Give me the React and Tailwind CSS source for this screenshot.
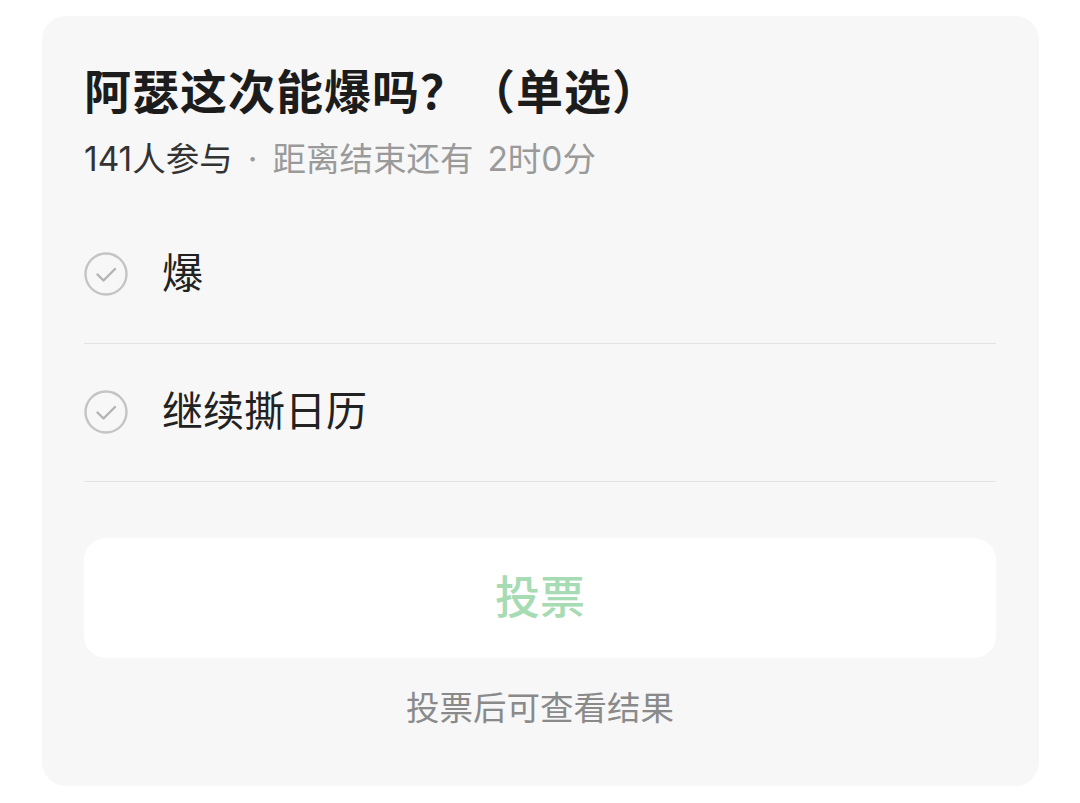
import React from 'react';

const options = ['爆', '继续撕日历'];

const CheckCircle = () => (
  <svg width="46" height="46" viewBox="0 0 46 46" fill="none" className="shrink-0">
    <circle cx="23" cy="23" r="20.5" stroke="#c4c4c4" strokeWidth="2.4" />
    <path d="M14.5 23.5l6 6 11.5-11.5" stroke="#b3b3b3" strokeWidth="2.4" strokeLinecap="round" strokeLinejoin="round" />
  </svg>
);

const App = () => {
  return (
    <div className="min-h-[803px] w-full bg-white pt-[16px] font-['Inter','Noto_Sans_CJK_SC',sans-serif]">
      <div className="ml-[42px] flex h-[770px] w-[997px] flex-col rounded-[24px] bg-[#f7f7f7] pl-[42px] pr-[43px] pt-[46px]">
        <h1 className="text-[47px] leading-[60px] font-bold tracking-[1px] text-[#1c1c1c]">
          阿瑟这次能爆吗？（单选）
        </h1>
        <p className="mt-[17px] text-[33.5px] leading-[40px] text-[#333]">
          141人参与
          <span className="text-[#9a9a9a]">
            <span className="px-[15px]">·</span>距离结束还有<span className="pl-[14px]">2时0分</span>
          </span>
        </p>

        <div className="mt-[27px]">
          {options.map((opt) => (
            <div
              key={opt}
              className="flex h-[138px] items-center gap-[33px] border-b border-[#e3e3e3] pb-[2px]"
            >
              <div className="-ml-[1px]">
                <CheckCircle />
              </div>
              <span className="text-[41px] leading-none text-[#222]">{opt}</span>
            </div>
          ))}
        </div>

        <button className="mt-[56px] flex h-[120px] w-full items-center justify-center rounded-[22px] bg-white text-[45px] font-medium text-[#a6dbb3]">
          投票
        </button>

        <p className="mt-[28px] text-center text-[33.5px] leading-[44px] text-[#8a8a8a]">
          投票后可查看结果
        </p>
      </div>
    </div>
  );
};

export default App;
